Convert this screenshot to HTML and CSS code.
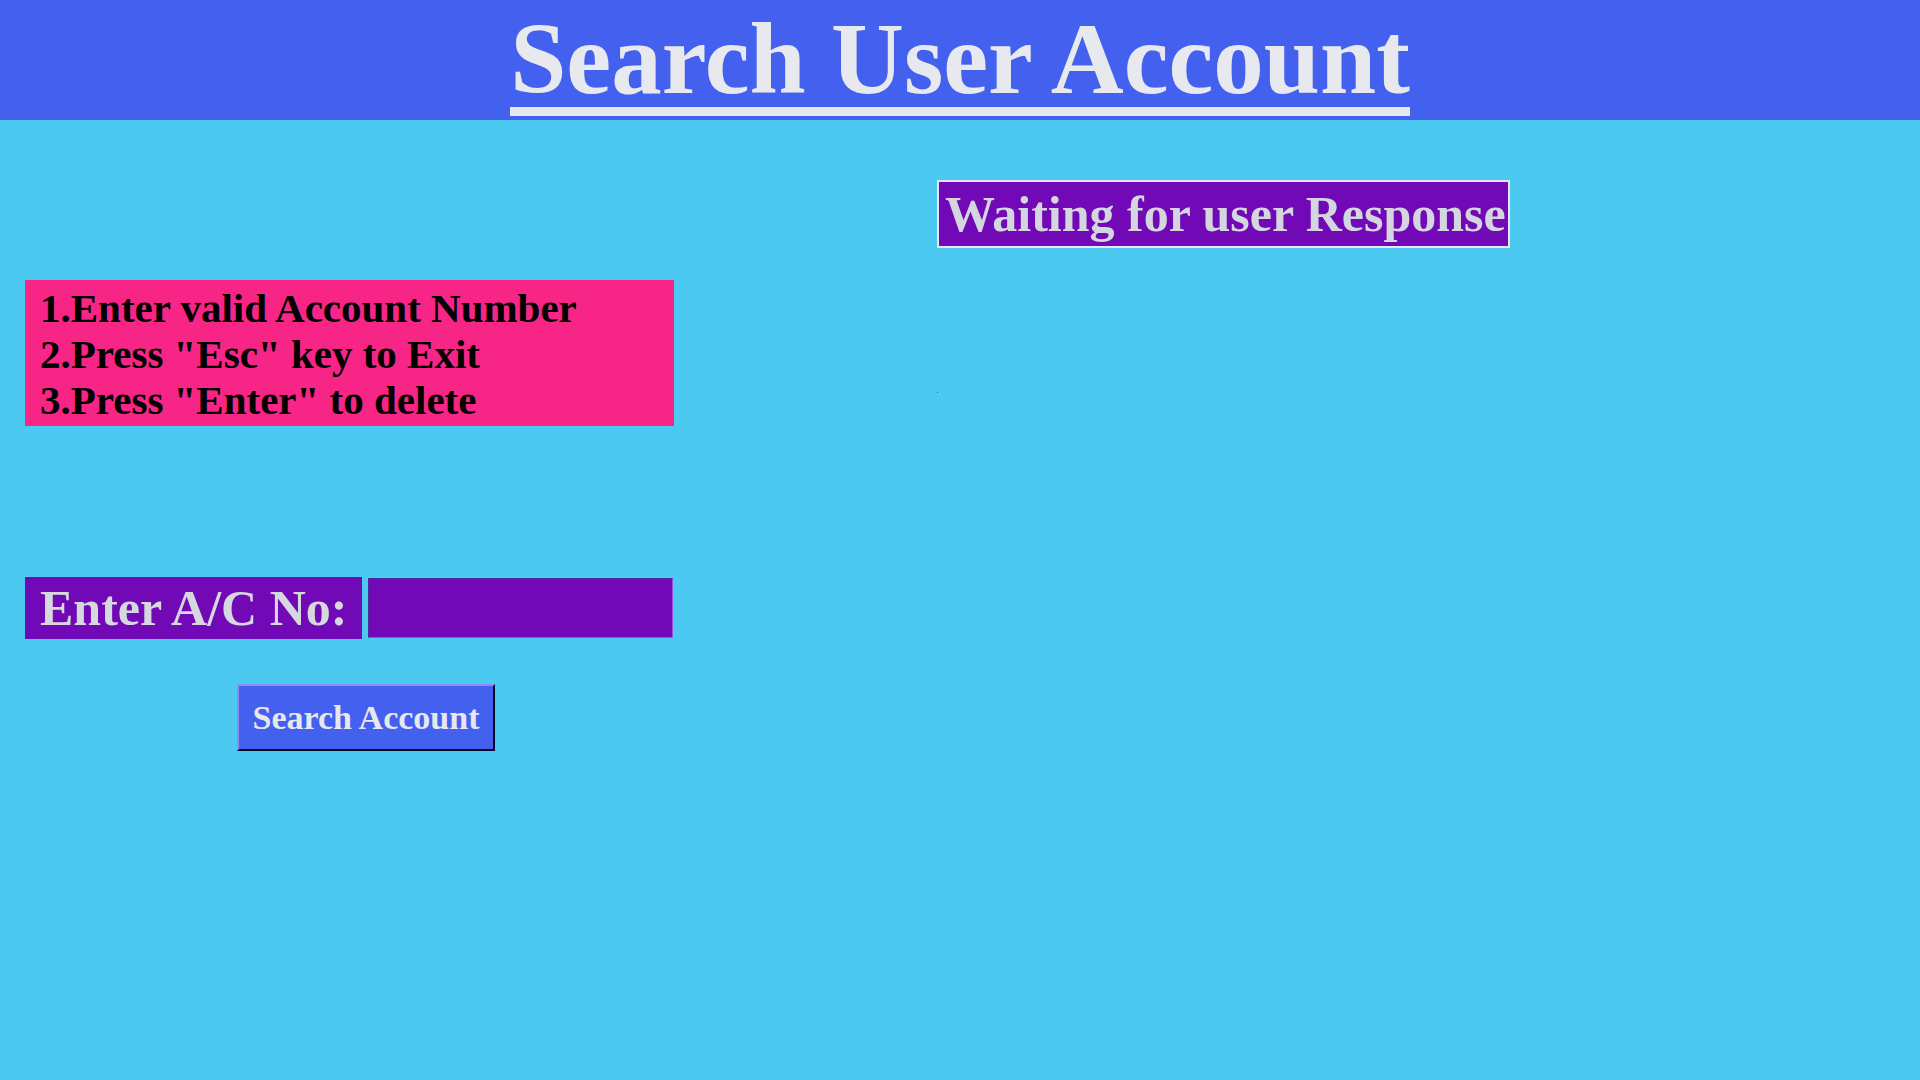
FILE: index.html
```html
<!DOCTYPE html>
<html lang="en">
<head>
<meta charset="utf-8">
<title>Search User Account</title>
<link rel="stylesheet" href="styles.css">
</head>
<body>
<header class="topbar">
  <h1 class="title"><span class="title-text">Search User Account</span></h1>
</header>
<main class="content">
  <section class="left-col">
    <div class="instructions">
      <div class="line">1.Enter valid Account Number</div>
      <div class="line">2.Press "Esc" key to Exit</div>
      <div class="line">3.Press "Enter" to delete</div>
    </div>
    <div class="entry-row">
      <label class="entry-label" for="acno">Enter A/C No:</label>
      <input class="entry-input" id="acno" type="text">
    </div>
    <button class="search-btn" type="button">Search Account</button>
  </section>
  <section class="right-col">
    <div class="status">Waiting for user Response</div>
    <div class="status-dot"></div>
  </section>
</main>
</body>
</html>
```
FILE: styles.css
```css
html, body {
  margin: 0;
  padding: 0;
}
body {
  background: #4cc9f0;
  width: 1920px;
  height: 1080px;
  overflow: hidden;
  font-family: "Liberation Serif", "Times New Roman", serif;
  font-weight: bold;
}
.topbar {
  box-sizing: border-box;
  height: 120px;
  background: #4361ee;
  padding-top: 11px;
}
.title {
  margin: 0;
  display: flex;
  justify-content: center;
  font-size: 101px;
  font-weight: bold;
}
.title-text {
  line-height: 96px;
  color: #e8e9ee;
  border-bottom: 9px solid #e8e9ee;
  white-space: nowrap;
}
.content {
  display: flex;
  padding-left: 25px;
}
.left-col {
  width: 649px;
  padding-top: 160px;
  display: flex;
  flex-direction: column;
  align-items: flex-start;
}
.instructions {
  box-sizing: border-box;
  width: 649px;
  height: 146px;
  background: #f72585;
  color: #000;
  font-size: 41px;
  line-height: 46px;
  padding: 5px 0 0 15px;
  white-space: nowrap;
}
.entry-row {
  display: flex;
  align-items: flex-start;
  gap: 6px;
  margin-top: 151px;
}
.entry-label {
  box-sizing: border-box;
  width: 337px;
  height: 62px;
  line-height: 62px;
  font-size: 50px;
  padding: 0 0 0 15px;
  background: #7209b7;
  color: #d5d8de;
  white-space: nowrap;
}
.entry-input {
  box-sizing: border-box;
  width: 305px;
  height: 60px;
  margin: 1px 0 0 0;
  background: #7209b7;
  border-style: solid;
  border-width: 1px;
  border-color: #4b2d9c #9a4fe0 #9a4fe0 #4b2d9c;
  outline: none;
  padding: 0 6px;
  color: #d5d8de;
  font-family: inherit;
  font-size: 40px;
}
.search-btn {
  box-sizing: border-box;
  width: 258px;
  height: 67px;
  margin: 45px 0 0 212px;
  padding: 0;
  background: #4361ee;
  color: #e6e7ef;
  font-family: inherit;
  font-weight: bold;
  font-size: 34px;
  line-height: 63px;
  border-style: solid;
  border-width: 2px;
  border-color: #8d8cf6 #0a0a2a #0a0a2a #8d8cf6;
  white-space: nowrap;
  cursor: pointer;
}
.right-col {
  margin-left: 263px;
  padding-top: 60px;
}
.status {
  box-sizing: border-box;
  width: 573px;
  height: 68px;
  border: 2px solid #e6e6f2;
  background: #7209b7;
  color: #d3d6de;
  font-size: 50px;
  line-height: 64px;
  padding: 0 0 0 6px;
  white-space: nowrap;
  overflow: hidden;
}
.status-dot {
  width: 1px;
  height: 1px;
  margin-top: 144px;
  background: #2a6b82;
}
```
